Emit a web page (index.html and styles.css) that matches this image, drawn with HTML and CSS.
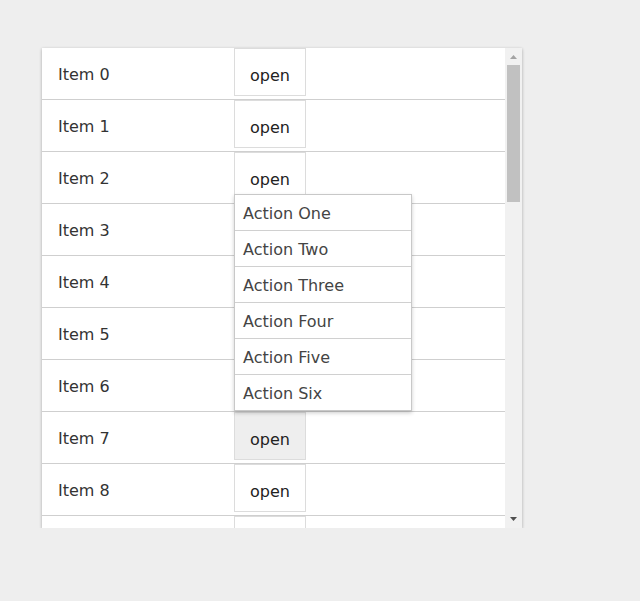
FILE: index.html
```html
<!DOCTYPE html>
<html>
<head>
<meta charset="utf-8">
<link rel="stylesheet" href="styles.css">
</head>
<body>
<div class="panel">
  <div class="list">
    <div class="row"><span class="label">Item 0</span><button class="btn">open</button></div>
    <div class="row"><span class="label">Item 1</span><button class="btn">open</button></div>
    <div class="row"><span class="label">Item 2</span><button class="btn">open</button></div>
    <div class="row"><span class="label">Item 3</span><button class="btn">open</button></div>
    <div class="row"><span class="label">Item 4</span><button class="btn">open</button></div>
    <div class="row"><span class="label">Item 5</span><button class="btn">open</button></div>
    <div class="row"><span class="label">Item 6</span><button class="btn">open</button></div>
    <div class="row"><span class="label">Item 7</span><button class="btn active">open</button></div>
    <div class="row"><span class="label">Item 8</span><button class="btn">open</button></div>
    <div class="row"><span class="label">Item 9</span><button class="btn">open</button></div>
    <ul class="menu">
      <li>Action One</li>
      <li>Action Two</li>
      <li>Action Three</li>
      <li>Action Four</li>
      <li>Action Five</li>
      <li>Action Six</li>
    </ul>
  </div>
  <div class="scrollbar">
    <div class="arrow up"><svg width="17" height="17" viewBox="0 0 17 17"><path d="M5 11 L8.5 7 L12 11 Z" fill="#a3a3a3"/></svg></div>
    <div class="track"><div class="thumb"></div></div>
    <div class="arrow down"><svg width="17" height="17" viewBox="0 0 17 17"><path d="M5 6 L8.5 10 L12 6 Z" fill="#505050"/></svg></div>
  </div>
</div>
</body>
</html>
```
FILE: styles.css
```css
html, body {
  margin: 0;
  padding: 0;
  background: #eeeeee;
}
body {
  padding: 48px 0 0 42px;
  font-family: "DejaVu Sans", sans-serif;
  font-size: 16px;
  color: #333;
}
.panel {
  display: flex;
  width: 480px;
  height: 480px;
  background: #fff;
  box-shadow: 0 1px 3px rgba(0, 0, 0, 0.3);
}
.list {
  flex: 1;
  position: relative;
  overflow: hidden;
}
.row {
  display: flex;
  align-items: flex-start;
  height: 51px;
  border-bottom: 1px solid #cfcfcf;
}
.label {
  width: 176px;
  padding: 1px 0 0 16px;
  line-height: 51px;
  color: #333;
}
.btn {
  width: 72px;
  height: 48px;
  margin: 0;
  padding: 6px 0 0 0;
  border: 1px solid #dcdcdc;
  background: #fff;
  font: inherit;
  color: #222;
  text-align: center;
}
.btn.active {
  background: #eeeeee;
}
.menu {
  position: absolute;
  top: 146px;
  left: 192px;
  width: 176px;
  margin: 0;
  padding: 0;
  list-style: none;
  background: #fff;
  border: 1px solid #c8c8c8;
  box-shadow: 0 2px 4px rgba(0, 0, 0, 0.2);
}
.menu li {
  height: 35px;
  line-height: 37px;
  padding-left: 8px;
  color: #444;
  border-bottom: 1px solid #d0d0d0;
}
.menu li:last-child {
  border-bottom: none;
}
.scrollbar {
  width: 17px;
  display: flex;
  flex-direction: column;
  background: #f1f1f1;
}
.arrow {
  height: 17px;
  display: flex;
}
.track {
  flex: 1;
  padding: 0 2px;
}
.thumb {
  height: 137px;
  background: #c1c1c1;
}
```
